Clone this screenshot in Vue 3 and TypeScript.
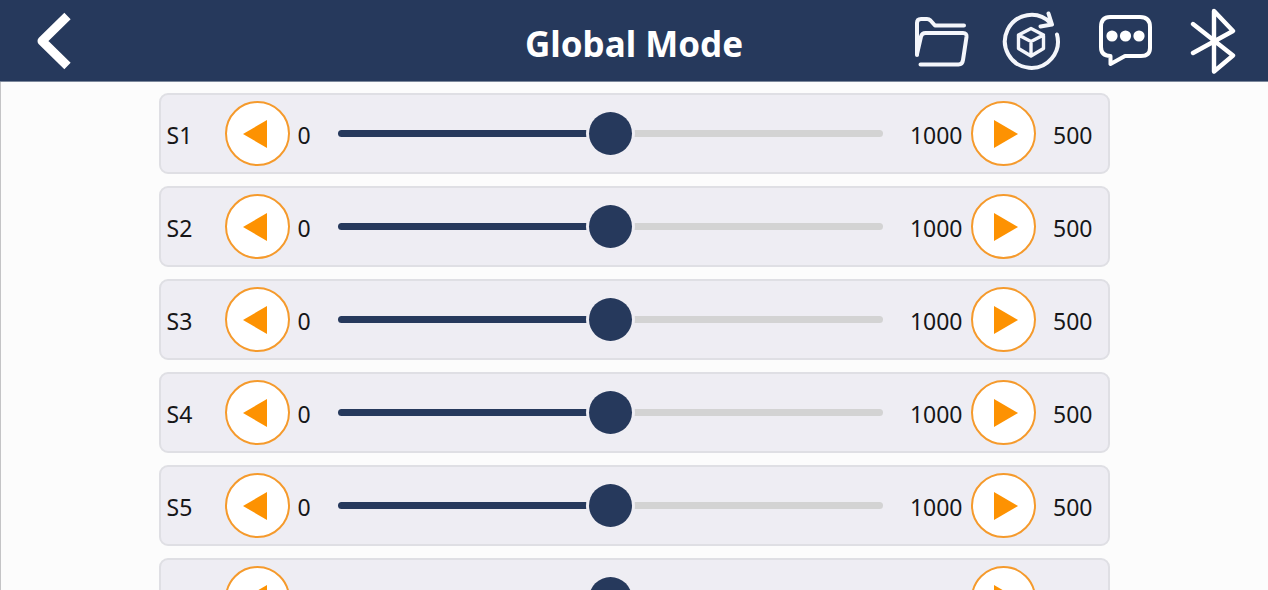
<script setup lang="ts">
import { ref } from 'vue'

interface Servo {
  name: string
  value: number
}

const MIN = 0
const MAX = 1000

const servos = ref<Servo[]>(
  Array.from({ length: 6 }, (_, i) => ({ name: `S${i + 1}`, value: 500 })),
)

function step(servo: Servo, delta: number): void {
  servo.value = Math.min(MAX, Math.max(MIN, servo.value + delta))
}

function fill(servo: Servo): string {
  return `${((servo.value - MIN) / (MAX - MIN)) * 100}%`
}
</script>

<template>
  <div class="page">
    <header class="bar">
      <div class="side">
        <button class="icon back" type="button" aria-label="Back">
          <svg width="44" height="64" viewBox="0 0 44 64" fill="none" stroke="#fff" stroke-width="9">
            <path d="M35.5 7 L10 32 L35.5 57" stroke-linejoin="round" />
          </svg>
        </button>
      </div>
      <h1 class="title">Global Mode</h1>
      <nav class="side actions">
        <button class="icon" type="button" aria-label="Files">
          <svg width="56" height="52" viewBox="0 0 56 52" fill="none" stroke="#f4f6fb" stroke-width="4" stroke-linecap="round" stroke-linejoin="round">
            <path d="M3 40 V8 Q3 4 7 4 H13 Q15 4 16.5 5.5 L21 10.5 H50" />
            <path d="M3 39 L7 21.5 Q8 18 11.5 18 H49 Q53 18 52.500 22 L49 45 Q48.400 49.500 44.500 49.500 H6.500" />
          </svg>
        </button>
        <button class="icon" type="button" aria-label="Reset">
          <svg width="64" height="60" viewBox="0 0 64 60" fill="none" stroke="#f4f6fb" stroke-width="4" stroke-linecap="round" stroke-linejoin="round">
            <path d="M55 23.500 A26.500 26.500 0 1 1 48.500 12" />
            <path d="M46.500 2.500 L50 13.500 L38.500 15.500" />
            <path d="M29 17.500 L41.500 24 V37.500 L29 45 L16.500 37.500 V24 Z M16.500 24 L29 30.500 L41.500 24 M29 30.500 V45" stroke-width="3.4" />
          </svg>
        </button>
        <button class="icon" type="button" aria-label="Messages">
          <svg width="60" height="56" viewBox="0 0 60 56" fill="none" stroke="#fff" stroke-width="4" stroke-linejoin="round">
            <path d="M12 4 H42 Q52 4 52 14 V35 Q52 43 43 43 H27 L12.500 51 V43 Q3 43 3 34 V14 Q3 4 12 4 Z" />
            <g fill="#fff" stroke="none">
              <circle cx="14" cy="23" r="5.600" />
              <circle cx="27.500" cy="23" r="5.600" />
              <circle cx="41" cy="23" r="5.600" />
            </g>
          </svg>
        </button>
        <button class="icon" type="button" aria-label="Bluetooth">
          <svg width="46" height="66" viewBox="0 0 46 66" fill="none" stroke="#fff" stroke-width="4.4" stroke-linecap="round" stroke-linejoin="round">
            <path d="M3 16 L43 47.500 L24 63.500 V3 L43 23 L3 45" />
          </svg>
        </button>
      </nav>
    </header>

    <main class="body">
      <ul class="list">
        <li v-for="servo in servos" :key="servo.name" class="row">
          <label class="name" :for="servo.name">{{ servo.name }}</label>
          <button class="round" type="button" :aria-label="`Decrease ${servo.name}`" @click="step(servo, -1)">
            <svg width="24" height="28" viewBox="0 0 24 28" fill="#fd9202"><path d="M0 14 L24 0 V28 Z" /></svg>
          </button>
          <span class="min">{{ MIN }}</span>
          <input
            :id="servo.name"
            v-model.number="servo.value"
            class="slider"
            type="range"
            :min="MIN"
            :max="MAX"
            :style="{ '--fill': fill(servo) }"
          />
          <span class="max">{{ MAX }}</span>
          <button class="round next" type="button" :aria-label="`Increase ${servo.name}`" @click="step(servo, 1)">
            <svg width="24" height="28" viewBox="0 0 24 28" fill="#fd9202"><path d="M24 14 L0 0 V28 Z" /></svg>
          </button>
          <output class="value" :for="servo.name">{{ servo.value }}</output>
        </li>
      </ul>
    </main>
  </div>
</template>

<style>
body {
  margin: 0;
}
</style>

<style scoped>
.page {
  display: flex;
  flex-direction: column;
  height: 100vh;
  box-sizing: border-box;
  background: #fcfcfc;
  color: #161618;
  font-family: "Noto Sans", sans-serif;
}

.bar {
  display: flex;
  align-items: center;
  flex: none;
  height: 82px;
  box-sizing: border-box;
  padding: 0 32px;
  border-bottom: 1px solid #7b879b;
  background: #26395c;
}

.side {
  display: flex;
  align-items: center;
  flex: 1 1 0;
}

.actions {
  justify-content: flex-end;
  gap: 32px;
}

.title {
  margin: 0;
  padding-top: 6px;
  color: #fff;
  font-size: 35px;
  line-height: 48px;
  font-weight: 700;
  white-space: nowrap;
}

.icon {
  display: flex;
  padding: 0;
  border: 0;
  background: none;
  cursor: pointer;
}

.body {
  flex: 1;
  min-height: 0;
  overflow-y: auto;
  scrollbar-width: none;
  box-shadow: inset 1px 0 0 #c4c4c6;
}

.list {
  display: flex;
  flex-direction: column;
  gap: 12px;
  width: 75%;
  margin: 0 auto;
  padding: 11px 0;
  list-style: none;
}

.row {
  display: flex;
  align-items: center;
  height: 81px;
  box-sizing: border-box;
  padding: 0 15px 0 6px;
  border: 2px solid #dfdfe4;
  border-radius: 9px;
  background: #eeedf3;
  font-size: 23px;
  line-height: 32px;
}

.name {
  width: 58px;
  padding-top: 2px;
}

.round {
  display: flex;
  align-items: center;
  justify-content: center;
  flex: none;
  width: 65px;
  height: 65px;
  padding: 0 5px 0 0;
  border: 2px solid #f59a2c;
  border-radius: 50%;
  background: #fff;
  cursor: pointer;
}

.next {
  padding: 0 0 0 5px;
}

.min {
  width: 48px;
  padding: 2px 0 0 8px;
}

.max {
  width: 88px;
  padding: 2px 8px 0 0;
  text-align: right;
}

.value {
  width: 57px;
  padding-top: 2px;
  text-align: right;
}

.name,
.min,
.max,
.value {
  flex: none;
  box-sizing: border-box;
}

.slider {
  flex: 1;
  min-width: 0;
  height: 43px;
  margin: 0;
  appearance: none;
  background: transparent;
  cursor: pointer;
}

.slider::-webkit-slider-runnable-track {
  height: 7px;
  border-radius: 4px;
  background: linear-gradient(to right, #26395c var(--fill), #d3d3d3 var(--fill));
}

.slider::-webkit-slider-thumb {
  width: 43px;
  height: 43px;
  margin-top: -18px;
  appearance: none;
  border: 0;
  border-radius: 50%;
  background: #26395c;
  box-shadow: 0 0 0 3px #eeedf3;
}
</style>
